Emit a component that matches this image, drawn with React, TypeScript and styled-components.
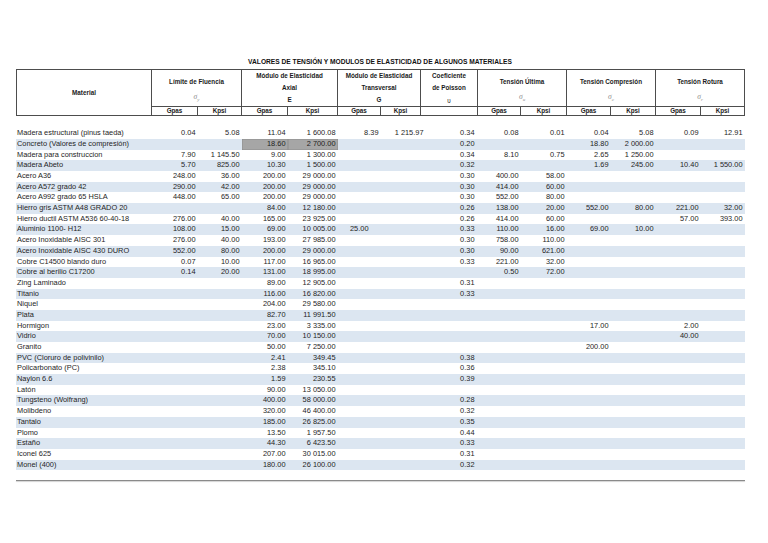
import React from "react";
import styled, { createGlobalStyle } from "styled-components";

const GlobalStyle = createGlobalStyle`
  html, body { margin: 0; padding: 0; background: #ffffff; }
  body { font-family: "Liberation Sans", Arial, sans-serif; color: #1c1c1c; }
`;

const COLS =
  "136px 46px 44px 46px 50px 43px 40px 57px 43px 46px 44px 45px 45px 44px";
const LINE = "#4d4d4d";

const Page = styled.div`
  width: 768px;
  height: 543px;
  box-sizing: border-box;
  padding: 58px 0 0 16px;
  overflow: hidden;
`;

const Sheet = styled.div`
  width: 729px;
`;

const Title = styled.div`
  height: 8px;
  margin-bottom: 3px;
  padding-right: 1px;
  font-size: 6.65px;
  line-height: 8px;
  font-weight: 700;
  text-align: center;
  color: #111;
`;

const Header = styled.div`
  display: grid;
  grid-template-columns: ${COLS};
  grid-template-rows: 37px 9px;
  border-top: 1px solid ${LINE};
`;

const MaterialHead = styled.div`
  grid-column: 1;
  grid-row: 1 / 3;
  box-sizing: border-box;
  border-left: 1px solid ${LINE};
  border-right: 1px solid ${LINE};
  border-bottom: 1px solid ${LINE};
  display: flex;
  align-items: center;
  justify-content: center;
  font-size: 6.3px;
  font-weight: 700;
  color: #1a1a1a;
`;

const GroupHead = styled.div<{ $span: number }>`
  grid-row: 1;
  grid-column: span ${(p) => p.$span};
  box-sizing: border-box;
  border-right: 1px solid ${LINE};
  border-bottom: 1px solid ${LINE};
  display: grid;
  grid-template-rows: 12px 12px 1fr;
  justify-items: center;
  align-items: center;
  font-size: 6.3px;
  font-weight: 700;
  color: #1a1a1a;
`;

const HeadLine = styled.div<{ $wide?: boolean }>`
  grid-row: ${(p) => (p.$wide ? "1 / 3" : "auto")};
  white-space: nowrap;
  line-height: 8px;
`;

const Symbol = styled.div`
  grid-row: 3;
  font-family: "Liberation Serif", "Times New Roman", serif;
  font-style: italic;
  font-weight: 400;
  font-size: 7.6px;
  color: #8c8c8c;
  line-height: 8px;
  margin-top: -3px;
  sub {
    font-size: 5px;
    vertical-align: -1.5px;
  }
`;

const PlainSymbol = styled.div<{ $bold: boolean }>`
  grid-row: 3;
  font-weight: ${(p) => (p.$bold ? 700 : 400)};
  font-size: 6.3px;
  color: #222;
  line-height: 8px;
  margin-top: ${(p) => (p.$bold ? -1 : 2)}px;
`;

const SubHead = styled.div`
  grid-row: 2;
  box-sizing: border-box;
  border-right: 1px solid ${LINE};
  border-bottom: 1px solid ${LINE};
  display: flex;
  align-items: center;
  justify-content: center;
  font-size: 6.3px;
  font-weight: 700;
  line-height: 8px;
  color: #1a1a1a;
`;

const Body = styled.div`
  margin-top: 12.3px;
`;

const Row = styled.div<{ $band: boolean }>`
  display: grid;
  grid-template-columns: ${COLS};
  height: 10.7px;
  background: ${(p) => (p.$band ? "#dce6f1" : "transparent")};
`;

const Name = styled.div`
  padding-left: 1px;
  font-size: 7.4px;
  line-height: 10.7px;
  white-space: nowrap;
  color: #1e1e1e;
`;

const Num = styled.div<{ $grey: boolean; $shift: number }>`
  box-sizing: border-box;
  padding-right: 2.5px;
  margin-right: ${(p) => p.$shift}px;
  text-align: right;
  font-size: 7.4px;
  line-height: 10.7px;
  white-space: nowrap;
  color: #1e1e1e;
  background: ${(p) => (p.$grey ? "#a6a6a6" : "transparent")};
  box-shadow: ${(p) => (p.$grey ? "inset 0 0 0 0.5px #8c8c8c" : "none")};
`;

const PageEdge = styled.div`
  margin-top: 9.3px;
  height: 1px;
  background: #8a8a8a;
  box-shadow: 0 1px 1px #cfcfcf;
`;

type Group = {
  lines: string[];
  wide?: boolean;
  sym?: React.ReactNode;
  plain?: string;
  bold?: boolean;
  span: number;
};

const groups: Group[] = [
  { lines: ["Límite de Fluencia"], wide: true, sym: <>σ<sub>y</sub></>, span: 2 },
  { lines: ["Módulo de Elasticidad", "Axial"], plain: "E", bold: true, span: 2 },
  { lines: ["Módulo de Elasticidad", "Transversal"], plain: "G", bold: true, span: 2 },
  { lines: ["Coeficiente", "de Poisson"], plain: "υ", span: 1 },
  { lines: ["Tensión Última"], wide: true, sym: <>σ<sub>u</sub></>, span: 2 },
  { lines: ["Tensión Compresión"], wide: true, sym: <>σ<sub>c</sub></>, span: 2 },
  { lines: ["Tensión Rotura"], wide: true, sym: <>σ<sub>r</sub></>, span: 2 },
];

const subs = [
  "Gpas", "Kpsi", "Gpas", "Kpsi", "Gpas", "Kpsi", "",
  "Gpas", "Kpsi", "Gpas", "Kpsi", "Gpas", "Kpsi",
];

type Data = { name: string; v: string[]; grey?: number[]; shift?: Record<number, number> };

const E = "";
const rows: Data[] = [
  { name: "Madera estructural (pinus taeda)", v: ["0.04", "5.08", "11.04", "1 600.08", "8.39", "1 215.97", "0.34", "0.08", "0.01", "0.04", "5.08", "0.09", "12.91"] },
  { name: "Concreto (Valores de compresión)", v: [E, E, "18.60", "2 700.00", E, E, "0.20", E, E, "18.80", "2 000.00", E, E], grey: [2, 3] },
  { name: "Madera para construccion", v: ["7.90", "1 145.50", "9.00", "1 300.00", E, E, "0.34", "8.10", "0.75", "2.65", "1 250.00", E, E] },
  { name: "Madera Abeto", v: ["5.70", "825.00", "10.30", "1 500.00", E, E, "0.32", E, E, "1.69", "245.00", "10.40", "1 550.00"] },
  { name: "Acero A36", v: ["248.00", "36.00", "200.00", "29 000.00", E, E, "0.30", "400.00", "58.00", E, E, E, E] },
  { name: "Acero A572 grado 42", v: ["290.00", "42.00", "200.00", "29 000.00", E, E, "0.30", "414.00", "60.00", E, E, E, E] },
  { name: "Acero A992 grado 65 HSLA", v: ["448.00", "65.00", "200.00", "29 000.00", E, E, "0.30", "552.00", "80.00", E, E, E, E] },
  { name: "Hierro gris ASTM A48 GRADO 20", v: [E, E, "84.00", "12 180.00", E, E, "0.26", "138.00", "20.00", "552.00", "80.00", "221.00", "32.00"] },
  { name: "Hierro ductil ASTM A536 60-40-18", v: ["276.00", "40.00", "165.00", "23 925.00", E, E, "0.26", "414.00", "60.00", E, E, "57.00", "393.00"] },
  { name: "Aluminio 1100- H12", v: ["108.00", "15.00", "69.00", "10 005.00", "25.00", E, "0.33", "110.00", "16.00", "69.00", "10.00", E, E], shift: { 4: 10 } },
  { name: "Acero Inoxidable AISC 301", v: ["276.00", "40.00", "193.00", "27 985.00", E, E, "0.30", "758.00", "110.00", E, E, E, E] },
  { name: "Acero Inoxidable AISC 430 DURO", v: ["552.00", "80.00", "200.00", "29 000.00", E, E, "0.30", "90.00", "621.00", E, E, E, E] },
  { name: "Cobre C14500 blando duro", v: ["0.07", "10.00", "117.00", "16 965.00", E, E, "0.33", "221.00", "32.00", E, E, E, E] },
  { name: "Cobre al berilio C17200", v: ["0.14", "20.00", "131.00", "18 995.00", E, E, E, "0.50", "72.00", E, E, E, E] },
  { name: "Zing Laminado", v: [E, E, "89.00", "12 905.00", E, E, "0.31", E, E, E, E, E, E] },
  { name: "Titanio", v: [E, E, "116.00", "16 820.00", E, E, "0.33", E, E, E, E, E, E] },
  { name: "Niquel", v: [E, E, "204.00", "29 580.00", E, E, E, E, E, E, E, E, E] },
  { name: "Plata", v: [E, E, "82.70", "11 991.50", E, E, E, E, E, E, E, E, E] },
  { name: "Hormigon", v: [E, E, "23.00", "3 335.00", E, E, E, E, E, "17.00", E, "2.00", E] },
  { name: "Vidrio", v: [E, E, "70.00", "10 150.00", E, E, E, E, E, E, E, "40.00", E] },
  { name: "Granito", v: [E, E, "50.00", "7 250.00", E, E, E, E, E, "200.00", E, E, E] },
  { name: "PVC (Cloruro de polivinilo)", v: [E, E, "2.41", "349.45", E, E, "0.38", E, E, E, E, E, E] },
  { name: "Policarbonato (PC)", v: [E, E, "2.38", "345.10", E, E, "0.36", E, E, E, E, E, E] },
  { name: "Naylon 6.6", v: [E, E, "1.59", "230.55", E, E, "0.39", E, E, E, E, E, E] },
  { name: "Latón", v: [E, E, "90.00", "13 050.00", E, E, E, E, E, E, E, E, E] },
  { name: "Tungsteno (Wolfrang)", v: [E, E, "400.00", "58 000.00", E, E, "0.28", E, E, E, E, E, E] },
  { name: "Molibdeno", v: [E, E, "320.00", "46 400.00", E, E, "0.32", E, E, E, E, E, E] },
  { name: "Tantalo", v: [E, E, "185.00", "26 825.00", E, E, "0.35", E, E, E, E, E, E] },
  { name: "Plomo", v: [E, E, "13.50", "1 957.50", E, E, "0.44", E, E, E, E, E, E] },
  { name: "Estaño", v: [E, E, "44.30", "6 423.50", E, E, "0.33", E, E, E, E, E, E] },
  { name: "Iconel 625", v: [E, E, "207.00", "30 015.00", E, E, "0.31", E, E, E, E, E, E] },
  { name: "Monel (400)", v: [E, E, "180.00", "26 100.00", E, E, "0.32", E, E, E, E, E, E] },
];

// column-level offsets (G Kpsi numbers overflow to the right in the source)
const colShift: Record<number, number> = { 5: -5, 6: 1 };

export default function App() {
  return (
    <>
      <GlobalStyle />
      <Page>
        <Sheet>
          <Title>VALORES DE TENSIÓN Y MODULOS DE ELASTICIDAD DE ALGUNOS MATERIALES</Title>
          <Header>
            <MaterialHead>Material</MaterialHead>
            {groups.map((g, i) => (
              <GroupHead key={i} $span={g.span}>
                {g.lines.map((l) => (
                  <HeadLine key={l} $wide={g.wide}>
                    {l}
                  </HeadLine>
                ))}
                {g.sym ? (
                  <Symbol>{g.sym}</Symbol>
                ) : (
                  <PlainSymbol $bold={!!g.bold}>{g.plain}</PlainSymbol>
                )}
              </GroupHead>
            ))}
            {subs.map((s, i) => (
              <SubHead key={i}>{s}</SubHead>
            ))}
          </Header>
          <Body>
            {rows.map((r, ri) => (
              <Row key={r.name} $band={ri % 2 === 1}>
                <Name>{r.name}</Name>
                {r.v.map((val, ci) => (
                  <Num
                    key={ci}
                    $grey={!!r.grey && r.grey.includes(ci)}
                    $shift={(r.shift && r.shift[ci]) ?? colShift[ci] ?? 0}
                  >
                    {val}
                  </Num>
                ))}
              </Row>
            ))}
          </Body>
          <PageEdge />
        </Sheet>
      </Page>
    </>
  );
}
